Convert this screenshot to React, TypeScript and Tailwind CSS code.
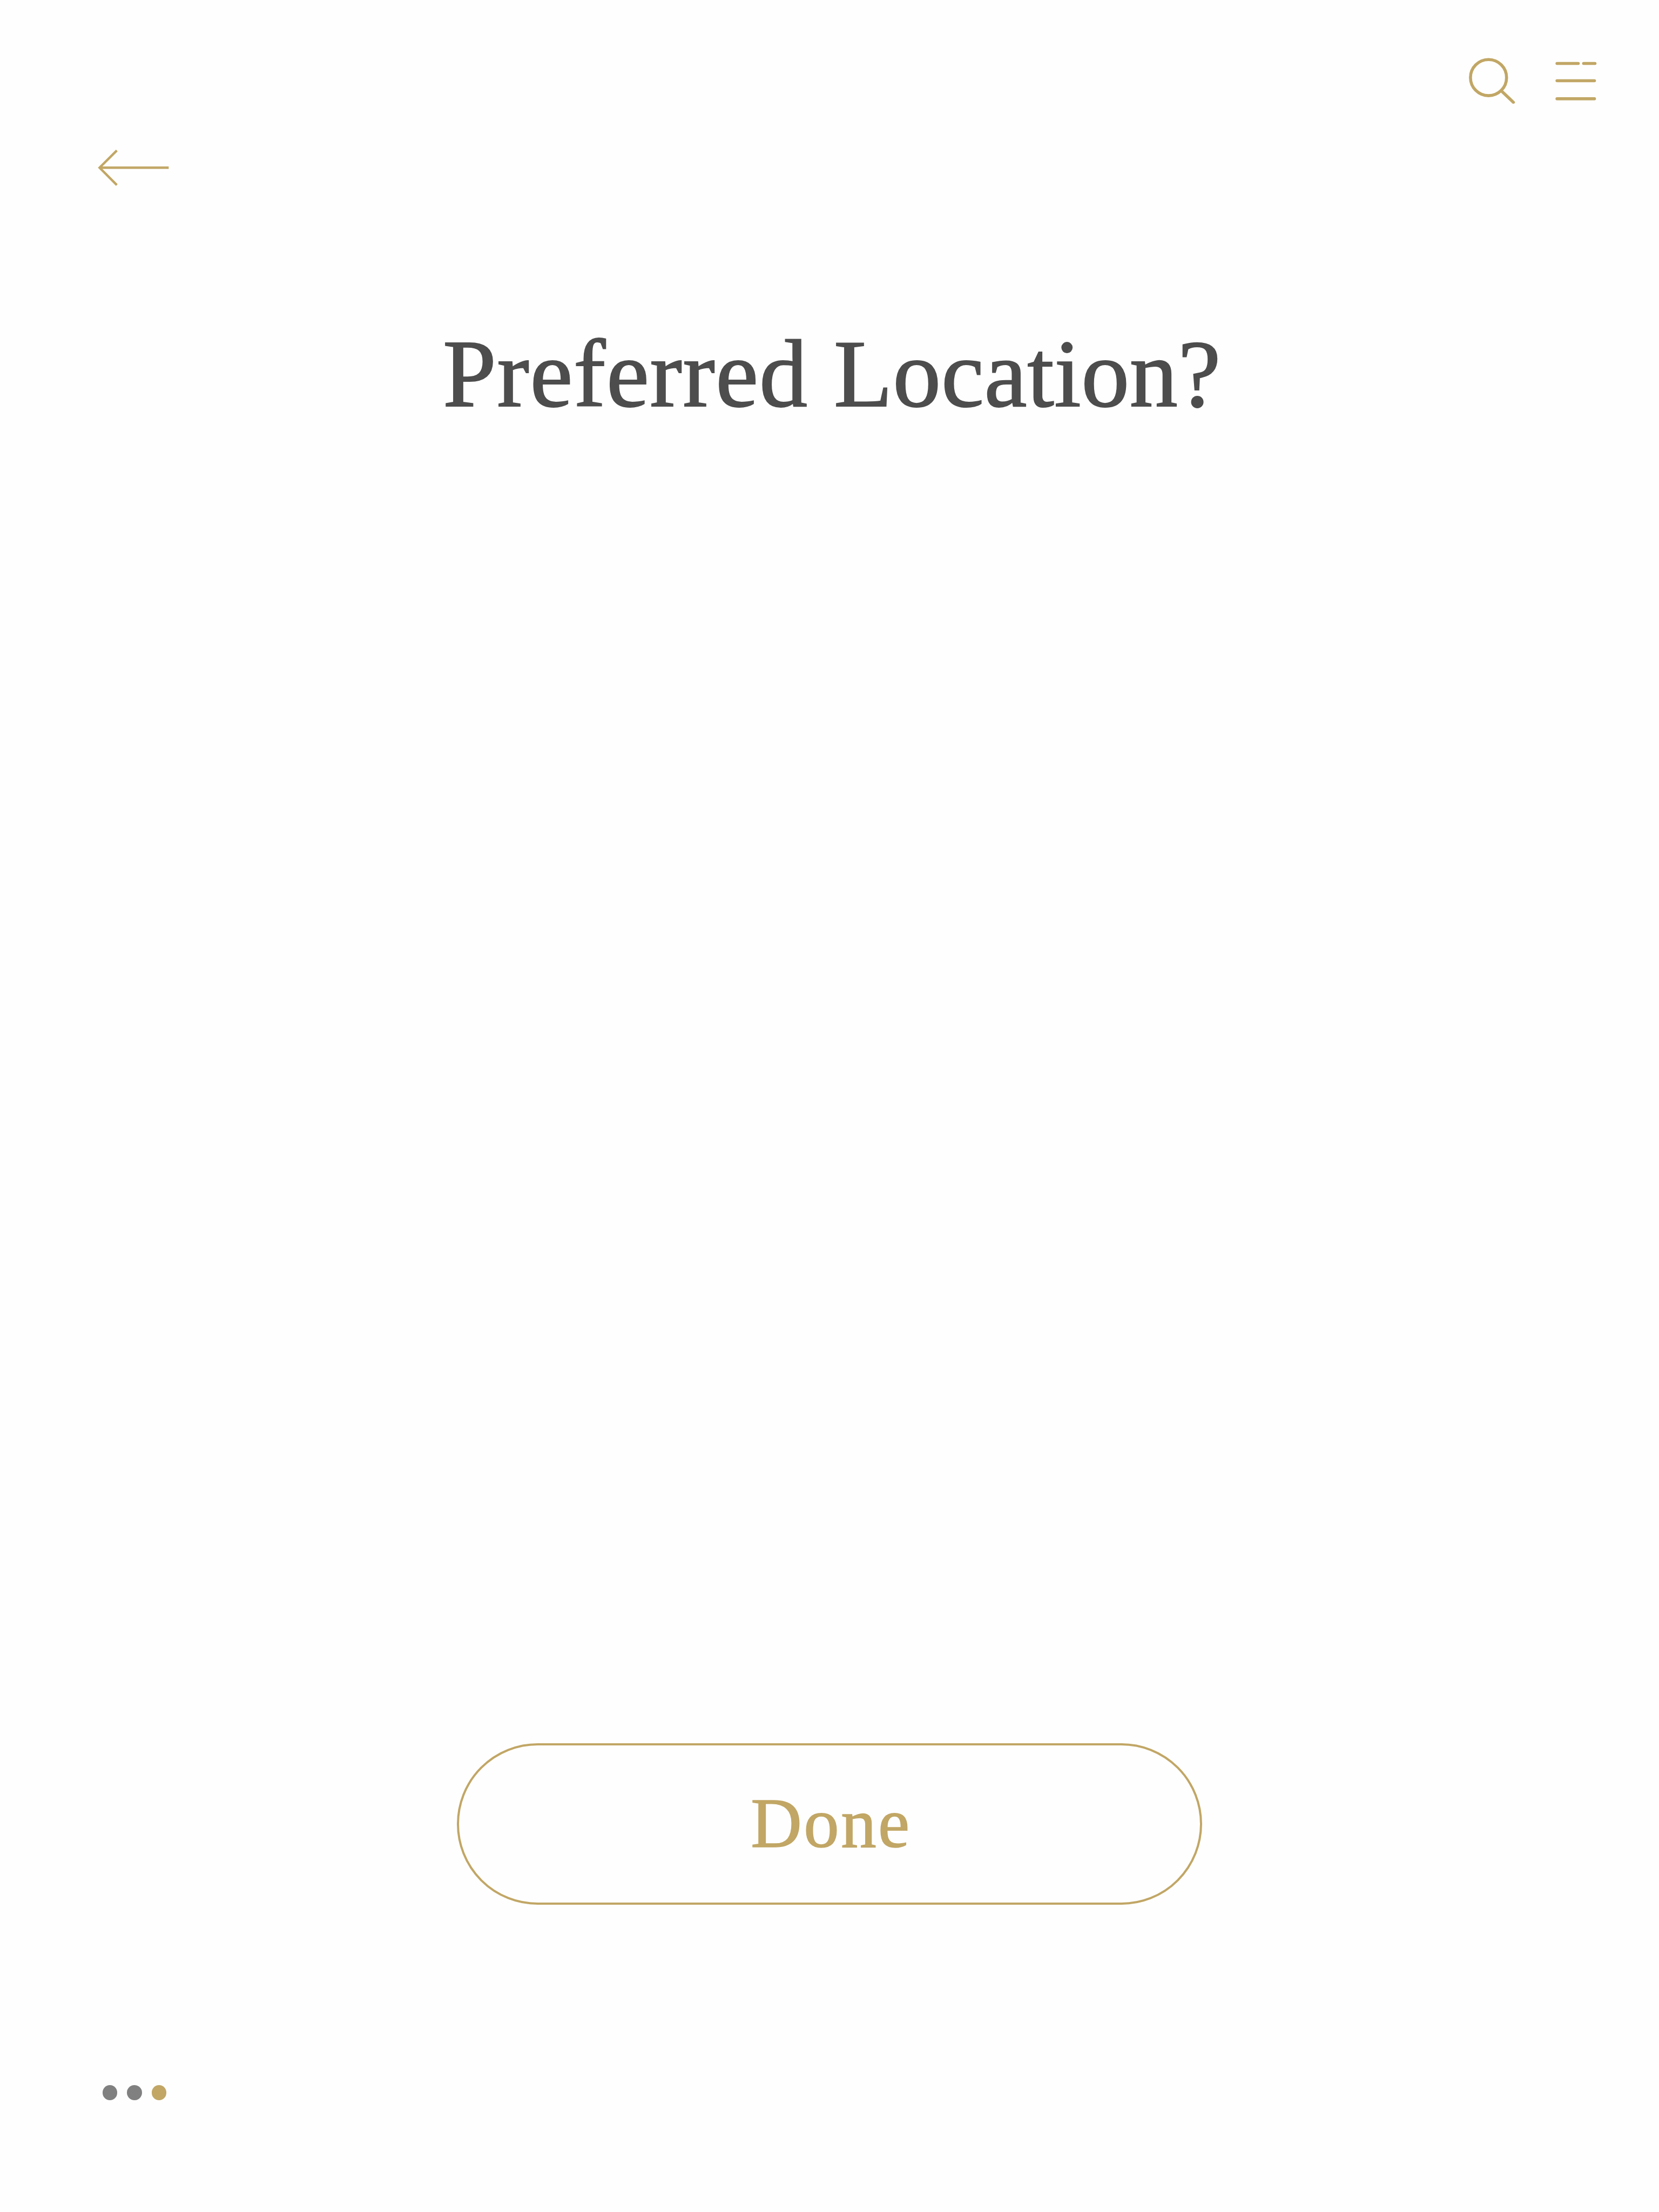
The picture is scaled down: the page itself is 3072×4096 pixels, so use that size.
function SearchIcon() {
  return (
    <svg className="block h-24 w-24" viewBox="2825 100 100 100" fill="none" stroke="currentColor" strokeWidth="5.8">
      <circle cx="2872.2" cy="149.7" r="34.8" />
      <path d="M2898 176.2 2920.2 197.3" strokeLinecap="round" strokeWidth="5.8" />
    </svg>
  );
}

function MenuIcon() {
  return (
    <svg className="block h-24 w-24" viewBox="2990 100 100 100" fill="none" stroke="currentColor" strokeWidth="5.8" strokeLinecap="round">
      <path d="M3004.7 122.4H3045.7M3056 122.4H3078M3004.7 155.7H3077M3004.7 190.5H3077" />
    </svg>
  );
}

function BackIcon() {
  return (
    <svg className="block h-24 w-36" viewBox="185 273 150 100" fill="none" stroke="currentColor" strokeWidth="4.5">
      <path d="M226 290.3 192.7 323.5 226 357M193 323.5H326" />
    </svg>
  );
}

export default function App() {
  return (
    <main className="flex h-[4096px] w-[3072px] flex-col overflow-hidden bg-[#fefefe] font-['Liberation_Serif',serif] text-[#c1a665]">
      <header className="flex h-[262px] justify-between pt-24 pr-[107px] pl-[177px]">
        <button aria-label="Back" className="h-24 pt-[166px]">
          <BackIcon />
        </button>
        <div className="flex h-24 gap-[62px]">
          <button aria-label="Search" className="h-24">
            <SearchIcon />
          </button>
          <button aria-label="Menu" className="h-24">
            <MenuIcon />
          </button>
        </div>
      </header>

      <h1 className="mt-[330px] flex h-[200px] pl-[820px] text-[178px] leading-[200px] whitespace-pre text-[#4d4d4d] [-webkit-text-stroke:2px_#4d4d4d]">
        <span className="w-[724px] tracking-[1.6px]">Preferred </span>
        <span className="tracking-[0.6px]">Location?</span>
      </h1>

      <button className="mx-auto mt-auto flex h-[299px] w-[1380px] items-center justify-center rounded-full border-4 border-[#c1a665] pb-[5px] pl-[6px] text-[131px] leading-none tracking-[3.4px] [-webkit-text-stroke:1.5px_#c1a665]">
        Done
      </button>

      <footer className="mt-[334px] flex h-[235px] gap-[18.1px] pl-[190px]">
        <span className="h-7 w-[27.3px] rounded-full bg-[#808080]" />
        <span className="h-7 w-[27.3px] rounded-full bg-[#808080]" />
        <span className="h-7 w-[27.3px] rounded-full bg-[#c1a665]" />
      </footer>
    </main>
  );
}
